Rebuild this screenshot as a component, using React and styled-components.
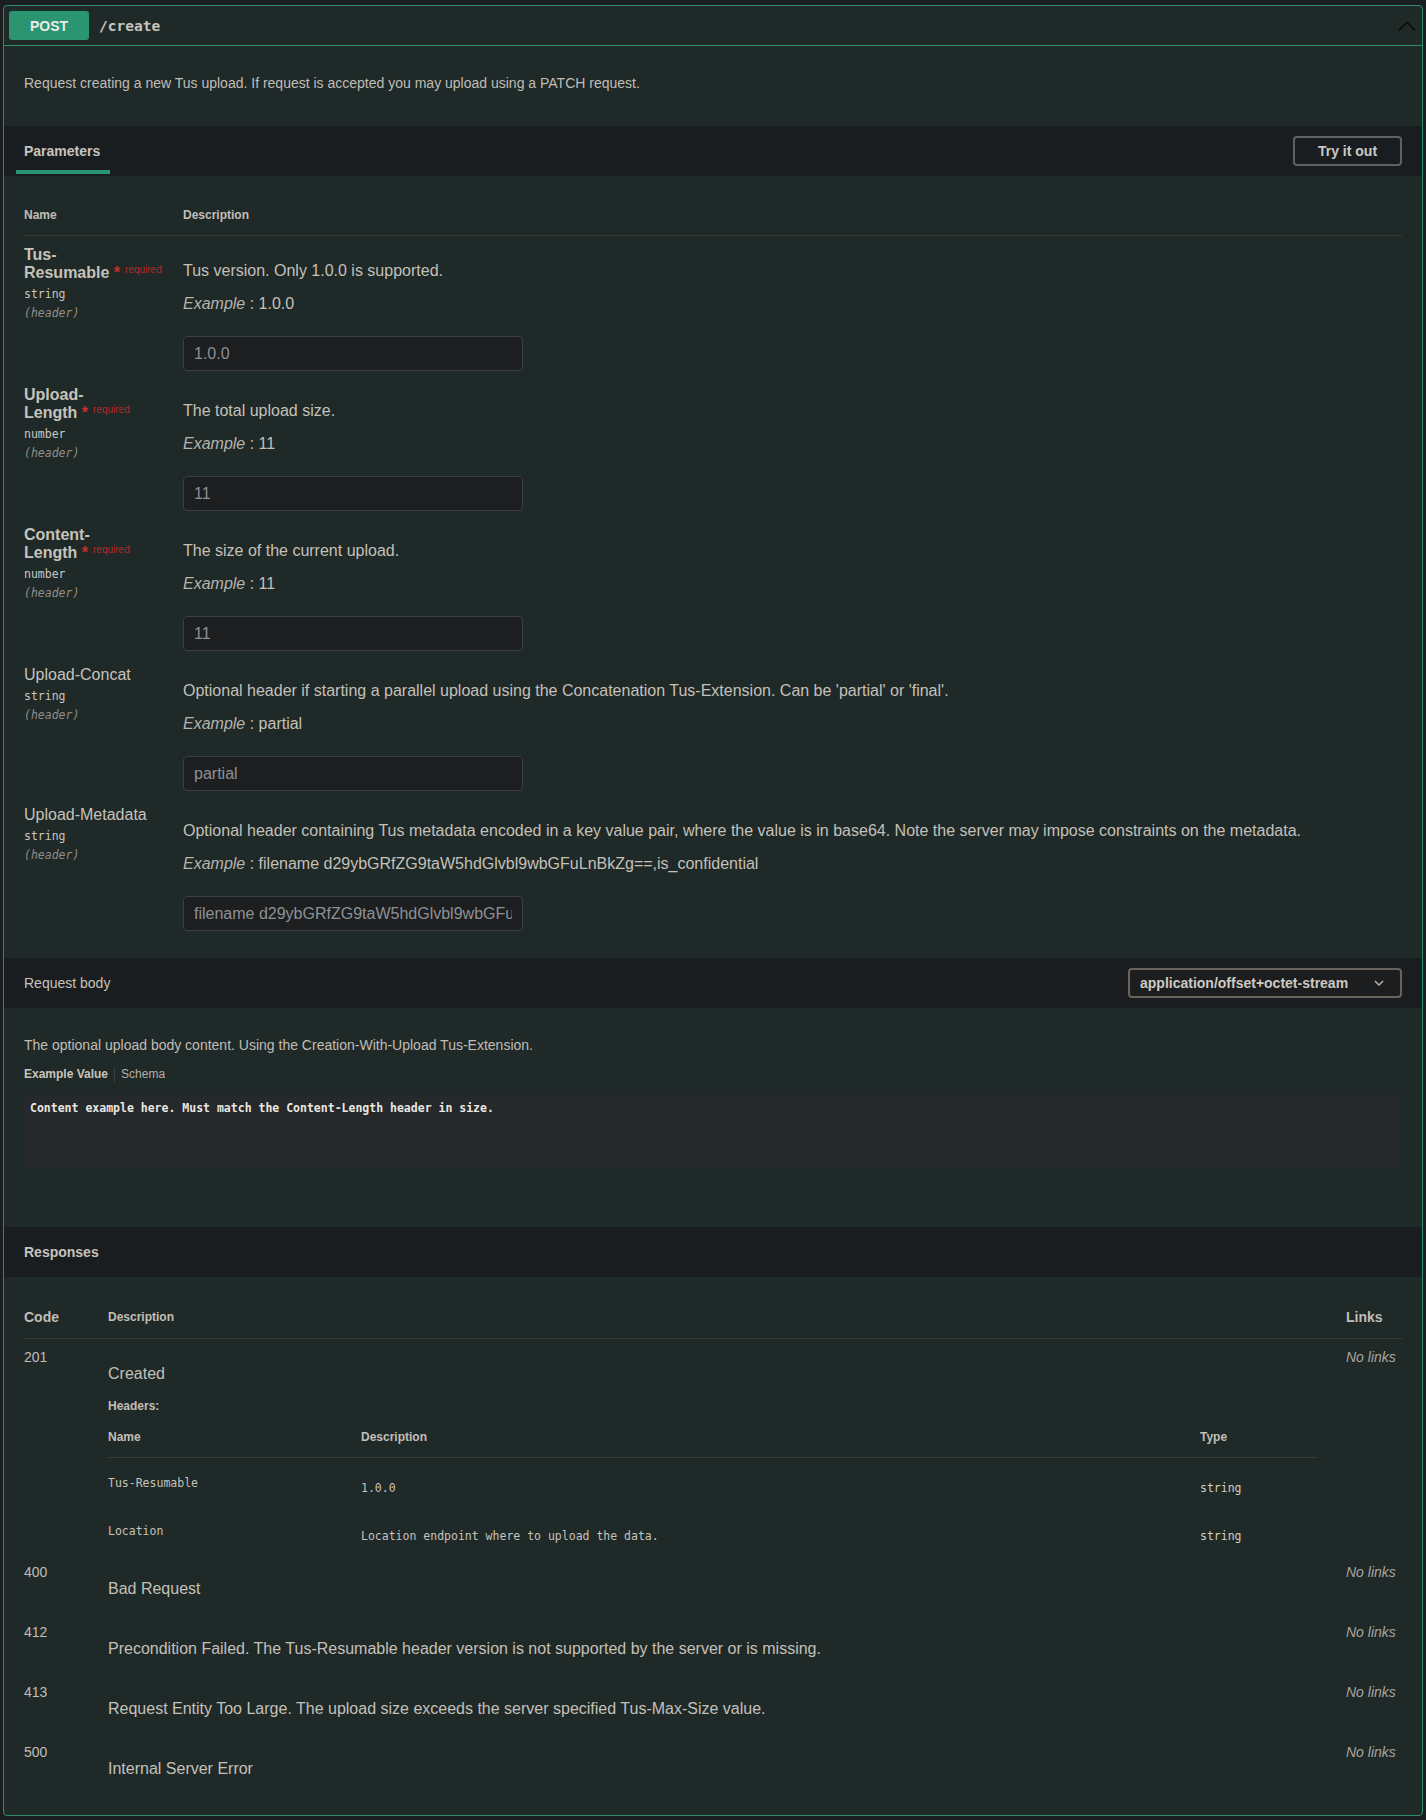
import React from "react";
import styled, { createGlobalStyle } from "styled-components";

const GlobalStyle = createGlobalStyle`
  html, body { margin: 0; padding: 0; background: #1b1e20; }
  body { font-family: "Liberation Sans", Arial, sans-serif; color: #c2beb8; }
  * { box-sizing: border-box; }
`;

const MONO = `"DejaVu Sans Mono", "Liberation Mono", monospace`;
const GREEN = "#2d8f67";
const LINE = "#343c3a";

const Page = styled.div`
  padding: 5px 3px 5px;
`;

const Opblock = styled.section`
  border: 1px solid ${GREEN};
  border-radius: 4px;
  background: #1f2927;
`;

const Summary = styled.div`
  display: flex;
  align-items: center;
  padding: 5px;
  border-bottom: 1px solid ${GREEN};
`;

const Method = styled.span`
  width: 80px;
  height: 29px;
  display: flex;
  align-items: center;
  justify-content: center;
  background: #2b9571;
  color: #ebebe9;
  font-weight: 700;
  font-size: 14px;
  border-radius: 3px;
`;

const Path = styled.span`
  margin-left: 10px;
  font-family: ${MONO};
  font-weight: 700;
  font-size: 14.5px;
  color: #c8c4be;
`;

const Collapse = styled.svg`
  margin-left: auto;
  margin-right: 1px;
  display: block;
`;

const Description = styled.div`
  padding: 27px 20px 33px;
  font-size: 14px;
  line-height: 20px;
  color: #c1bdb7;
`;

const SectionBar = styled.div`
  height: 50px;
  display: flex;
  align-items: center;
  justify-content: space-between;
  padding: 0 20px;
  background: #1a1d1f;
`;

const Tab = styled.div`
  position: relative;
  align-self: stretch;
  display: flex;
  align-items: center;
  font-size: 14px;
  font-weight: 700;
  color: #c8c4be;
  &::after {
    content: "";
    position: absolute;
    left: -8px;
    right: -10px;
    bottom: 2px;
    height: 4px;
    background: #2b9571;
  }
`;

const BarTitle = styled.div`
  font-size: 14px;
  font-weight: ${(p) => (p.$bold ? 700 : 400)};
  color: #c6c2bc;
`;

const TryButton = styled.button`
  width: 109px;
  height: 30px;
  border: 2px solid #5d6165;
  border-radius: 4px;
  background: transparent;
  color: #cdc9c4;
  font-family: inherit;
  font-size: 14px;
  font-weight: 700;
  padding: 0;
`;

const TableWrap = styled.div`
  padding: ${(p) => p.$pad || "20px"};
`;

const HeadRow = styled.div`
  display: flex;
  align-items: center;
  padding: ${(p) => p.$pad || "12px 0"};
  border-bottom: 1px solid ${LINE};
`;

const HeadCell = styled.div`
  width: ${(p) => (p.$w ? `${p.$w}px` : "auto")};
  flex: ${(p) => (p.$w ? "none" : "1")};
  font-size: ${(p) => p.$size || 12}px;
  line-height: ${(p) => (p.$size === 14 ? 17 : 15)}px;
  font-weight: 700;
  color: #c2beb8;
`;

const ParamRow = styled.div`
  display: flex;
  height: 140px;
  padding-top: 10px;
`;

const NameCell = styled.div`
  width: 159px;
  flex: none;
`;

const ParamName = styled.div`
  font-size: 16px;
  line-height: 18px;
  font-weight: ${(p) => (p.$required ? 700 : 400)};
  color: #c6c2bc;
`;

const Star = styled.span`
  color: #c9302c;
`;

const RequiredTag = styled.span`
  position: relative;
  top: -5px;
  padding: 0 5px;
  font-size: 10px;
  line-height: 10px;
  font-weight: 400;
  color: #b02a2c;
`;

const TypeLine = styled.div`
  margin-top: 3px;
  font-family: ${MONO};
  font-size: 11.5px;
  line-height: 18px;
  color: #cac6c0;
`;

const InLine = styled.div`
  margin-top: 1px;
  font-family: ${MONO};
  font-style: italic;
  font-size: 11.5px;
  line-height: 18px;
  color: #918d88;
`;

const DescCell = styled.div`
  flex: 1;
  min-width: 0;
`;

const ParamText = styled.p`
  margin: 15px 0 0;
  font-size: 16px;
  line-height: 20px;
  color: #c4c0ba;
`;

const ExampleLine = styled.div`
  margin-top: 13px;
  font-size: 16px;
  line-height: 20px;
  color: #c4c0ba;
  i {
    color: #b7b3ad;
  }
`;

const ValueInput = styled.input`
  display: block;
  margin-top: 22px;
  width: 340px;
  height: 35px;
  padding: 0 10px;
  background: #1c1e20;
  border: 1px solid #3c3f42;
  border-radius: 4px;
  font-family: "Liberation Sans", Arial, sans-serif;
  font-size: 16px;
  color: #8d9194;
  outline: none;
`;

const Select = styled.div`
  width: 274px;
  height: 30px;
  display: flex;
  align-items: center;
  justify-content: space-between;
  padding: 0 16px 0 10px;
  border: 2px solid #6a635b;
  border-radius: 4px;
  background: #1b1d1f;
  font-size: 14px;
  font-weight: 700;
  color: #cdc9c3;
`;

const BodySection = styled.div`
  padding: 20px 20px 60px;
`;

const BodyText = styled.p`
  margin: 8px 0 0;
  font-size: 14px;
  line-height: 18px;
  color: #c1bdb7;
`;

const ExampleTabs = styled.div`
  margin-top: 13px;
  display: flex;
  align-items: center;
  font-size: 12px;
  line-height: 15px;
`;

const ExampleTab = styled.span`
  font-weight: ${(p) => (p.$active ? 700 : 400)};
  color: ${(p) => (p.$active ? "#c8c4be" : "#b3afa9")};
  padding: ${(p) => (p.$active ? "0 6px 0 0" : "0 0 0 6px")};
  border-right: ${(p) => (p.$active ? "1px solid #3b403e" : "none")};
`;

const CodeBox = styled.pre`
  margin: 13px 0 0;
  height: 72px;
  padding: 6px;
  background: #26292b;
  border-radius: 4px;
  font-family: ${MONO};
  font-size: 11.5px;
  line-height: 15px;
  font-weight: 700;
  color: #ebe7e2;
`;

const RespRow = styled.div`
  display: flex;
  align-items: flex-start;
  padding-top: 10px;
`;

const CodeCell = styled.div`
  width: 84px;
  flex: none;
  font-size: 14px;
  line-height: 17px;
  color: #c1bdb7;
`;

const RespDesc = styled.div`
  flex: 1;
  min-width: 0;
  padding-right: 28px;
`;

const RespText = styled.p`
  margin: 16px 0;
  font-size: 16px;
  line-height: 18px;
  color: #c4c0ba;
`;

const LinksCell = styled.div`
  width: 56px;
  flex: none;
  white-space: nowrap;
  font-size: 14px;
  line-height: 17px;
  font-style: italic;
  color: #a9a5a0;
`;

const HeadersLabel = styled.div`
  font-size: 12px;
  line-height: 15px;
  font-weight: 700;
  color: #c2beb8;
`;

const HdrRow = styled.div`
  display: flex;
  height: 48px;
`;

const HdrCell = styled.div`
  width: ${(p) => (p.$w ? `${p.$w}px` : "auto")};
  flex: ${(p) => (p.$w ? "none" : "1")};
  padding-top: ${(p) => (p.$name ? 18 : 23)}px;
  font-family: ${MONO};
  font-size: 11.5px;
  line-height: 15px;
  color: ${(p) => (p.$type ? "#d2cec8" : "#c6c2bc")};
`;

const params = [
  { name: "Tus-Resumable", required: true, type: "string", desc: "Tus version. Only 1.0.0 is supported.", example: "1.0.0" },
  { name: "Upload-Length", required: true, type: "number", desc: "The total upload size.", example: "11" },
  { name: "Content-Length", required: true, type: "number", desc: "The size of the current upload.", example: "11" },
  {
    name: "Upload-Concat",
    type: "string",
    desc: "Optional header if starting a parallel upload using the Concatenation Tus-Extension. Can be 'partial' or 'final'.",
    example: "partial",
  },
  {
    name: "Upload-Metadata",
    type: "string",
    desc: "Optional header containing Tus metadata encoded in a key value pair, where the value is in base64. Note the server may impose constraints on the metadata.",
    example: "filename d29ybGRfZG9taW5hdGlvbl9wbGFuLnBkZg==,is_confidential",
  },
];

const responses = [
  { code: "201", text: "Created", headers: true },
  { code: "400", text: "Bad Request" },
  { code: "412", text: "Precondition Failed. The Tus-Resumable header version is not supported by the server or is missing." },
  { code: "413", text: "Request Entity Too Large. The upload size exceeds the server specified Tus-Max-Size value." },
  { code: "500", text: "Internal Server Error" },
];

const respHeaders = [
  { name: "Tus-Resumable", desc: "1.0.0", type: "string" },
  { name: "Location", desc: "Location endpoint where to upload the data.", type: "string" },
];

function HeadersTable() {
  return (
    <>
      <HeadersLabel>Headers:</HeadersLabel>
      <HeadRow $pad="16px 0 12px">
        <HeadCell $w={253}>Name</HeadCell>
        <HeadCell $w={839}>Description</HeadCell>
        <HeadCell>Type</HeadCell>
      </HeadRow>
      {respHeaders.map((h) => (
        <HdrRow key={h.name}>
          <HdrCell $w={253} $name>
            {h.name}
          </HdrCell>
          <HdrCell $w={839}>{h.desc}</HdrCell>
          <HdrCell $type>{h.type}</HdrCell>
        </HdrRow>
      ))}
    </>
  );
}

export default function App() {
  return (
    <>
      <GlobalStyle />
      <Page>
        <Opblock>
          <Summary>
            <Method>POST</Method>
            <Path>/create</Path>
            <Collapse width="18" height="10" viewBox="0 0 18 10">
              <polyline points="1,9.3 9,1.3 17,9.3" fill="none" stroke="#0a0a0a" strokeWidth="1.6" />
            </Collapse>
          </Summary>

          <Description>
            Request creating a new Tus upload. If request is accepted you may upload using a PATCH request.
          </Description>

          <SectionBar>
            <Tab>Parameters</Tab>
            <TryButton>Try it out</TryButton>
          </SectionBar>

          <TableWrap $pad="20px 20px 22px">
            <HeadRow>
              <HeadCell $w={159}>Name</HeadCell>
              <HeadCell>Description</HeadCell>
            </HeadRow>
            {params.map((p) => (
              <ParamRow key={p.name}>
                <NameCell>
                  <ParamName $required={p.required}>
                    {p.name}
                    {p.required && (
                      <>
                        <Star>&nbsp;*</Star>
                        <RequiredTag>required</RequiredTag>
                      </>
                    )}
                  </ParamName>
                  <TypeLine>{p.type}</TypeLine>
                  <InLine>(header)</InLine>
                </NameCell>
                <DescCell>
                  <ParamText>{p.desc}</ParamText>
                  <ExampleLine>
                    <i>Example</i> : {p.example}
                  </ExampleLine>
                  <ValueInput readOnly value={p.example} />
                </DescCell>
              </ParamRow>
            ))}
          </TableWrap>

          <SectionBar>
            <BarTitle>Request body</BarTitle>
            <Select>
              <span>application/offset+octet-stream</span>
              <svg width="10" height="6" viewBox="0 0 10 6">
                <polyline points="1,1 5,5 9,1" fill="none" stroke="#bdb9b3" strokeWidth="1.4" />
              </svg>
            </Select>
          </SectionBar>

          <BodySection>
            <BodyText>The optional upload body content. Using the Creation-With-Upload Tus-Extension.</BodyText>
            <ExampleTabs>
              <ExampleTab $active>Example Value</ExampleTab>
              <ExampleTab>Schema</ExampleTab>
            </ExampleTabs>
            <CodeBox>Content example here. Must match the Content-Length header in size.</CodeBox>
          </BodySection>

          <SectionBar>
            <BarTitle $bold>Responses</BarTitle>
          </SectionBar>

          <TableWrap $pad="20px 20px 21px">
            <HeadRow>
              <HeadCell $w={84} $size={14}>
                Code
              </HeadCell>
              <HeadCell>Description</HeadCell>
              <HeadCell $w={56} $size={14}>
                Links
              </HeadCell>
            </HeadRow>
            {responses.map((r) => (
              <RespRow key={r.code}>
                <CodeCell>{r.code}</CodeCell>
                <RespDesc>
                  <RespText>{r.text}</RespText>
                  {r.headers && <HeadersTable />}
                </RespDesc>
                <LinksCell>No links</LinksCell>
              </RespRow>
            ))}
          </TableWrap>
        </Opblock>
      </Page>
    </>
  );
}
